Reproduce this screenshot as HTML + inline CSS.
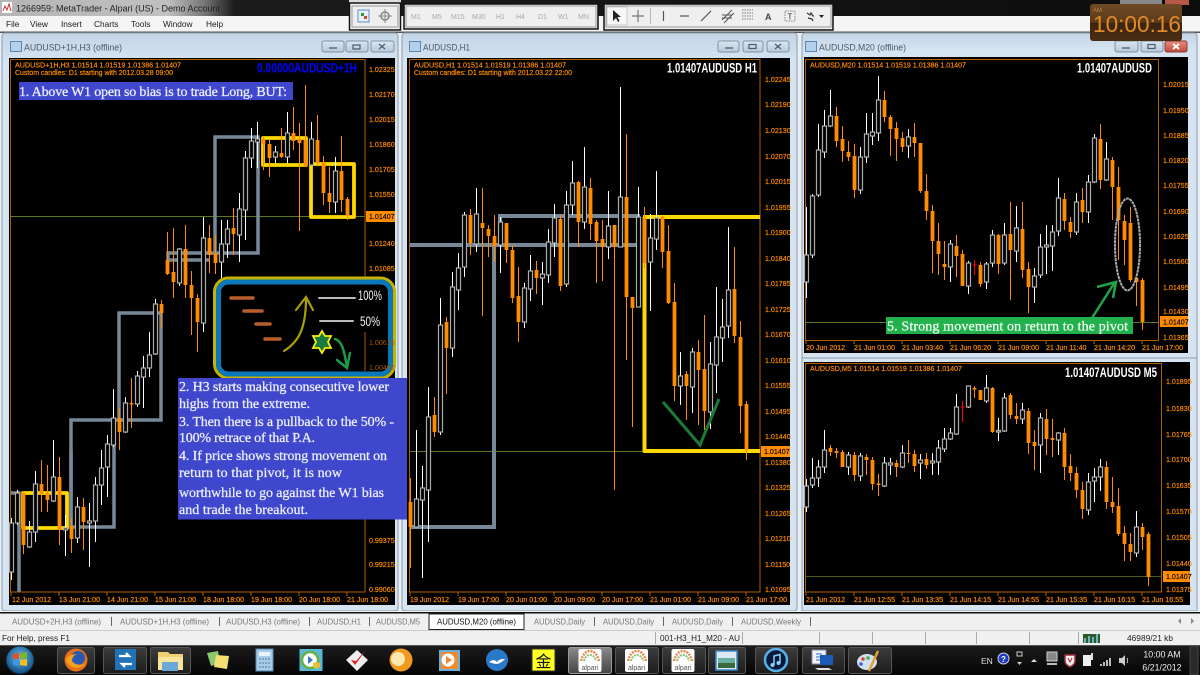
<!DOCTYPE html>
<html><head><meta charset="utf-8"><title>MetaTrader</title>
<style>html,body{margin:0;padding:0;background:#000;width:1200px;height:675px;overflow:hidden}svg{display:block}</style></head>
<body>
<svg width="1200" height="675" viewBox="0 0 1200 675" xmlns="http://www.w3.org/2000/svg" font-family="'Liberation Sans',sans-serif">
<defs>
<linearGradient id="tb" x1="0" x2="1" y1="0" y2="0"><stop offset="0" stop-color="#b5b5b5"/><stop offset=".14" stop-color="#c0c0c0"/><stop offset=".17" stop-color="#777"/><stop offset=".195" stop-color="#1c1c1c"/><stop offset="1" stop-color="#0c0c0c"/></linearGradient>
<linearGradient id="win" x1="0" x2="0" y1="0" y2="1"><stop offset="0" stop-color="#c3d4e6"/><stop offset=".05" stop-color="#d6e4f1"/><stop offset="1" stop-color="#d6e4f1"/></linearGradient>
<linearGradient id="btn" x1="0" x2="0" y1="0" y2="1"><stop offset="0" stop-color="#dbe7f2"/><stop offset="1" stop-color="#b5c8da"/></linearGradient>
<linearGradient id="red" x1="0" x2="0" y1="0" y2="1"><stop offset="0" stop-color="#e88e80"/><stop offset="1" stop-color="#c04a3c"/></linearGradient>
<linearGradient id="task" x1="0" x2="0" y1="0" y2="1"><stop offset="0" stop-color="#1c1c1c"/><stop offset="1" stop-color="#050505"/></linearGradient>
<linearGradient id="tbtn" x1="0" x2="0" y1="0" y2="1"><stop offset="0" stop-color="#3c3c3c"/><stop offset="1" stop-color="#1c1c1c"/></linearGradient>
<linearGradient id="tact" x1="0" x2="0" y1="0" y2="1"><stop offset="0" stop-color="#8a8a8a"/><stop offset="1" stop-color="#444"/></linearGradient>
<linearGradient id="clk" x1="0" x2="0" y1="0" y2="1"><stop offset="0" stop-color="#6e4a26"/><stop offset=".5" stop-color="#5c3a1a"/><stop offset=".52" stop-color="#3c2410"/><stop offset="1" stop-color="#4a2e14"/></linearGradient>
<radialGradient id="orb" cx=".5" cy=".4" r=".6"><stop offset="0" stop-color="#6ab8e8"/><stop offset="1" stop-color="#0c4a80"/></radialGradient>
</defs>

<!-- base -->
<rect width="1200" height="675" fill="#e8eef5"/>
<rect width="1200" height="16" fill="url(#tb)"/>
<rect x="1120" y="0" width="42" height="5" fill="#888"/><rect x="1165" y="0" width="24" height="5" fill="#b8584a"/>
<text x="16" y="11.5" font-size="9.6" fill="#222" textLength="204" lengthAdjust="spacingAndGlyphs">1266959: MetaTrader - Alpari (US) - Demo Account</text>
<rect x="2" y="2" width="10" height="11" fill="#fff"/><path d="M3 11l2-5 2 4 2-6 2 7" stroke="#c33" fill="none"/>
<rect y="16" width="1200" height="16" fill="#f5f5f5"/>
<rect y="31.5" width="1200" height="1.5" fill="#555"/>
<g font-size="8.3" fill="#1a1a1a">
<text x="6" y="27">File</text><text x="30" y="27">View</text><text x="61" y="27">Insert</text><text x="94" y="27">Charts</text><text x="131" y="27">Tools</text><text x="163" y="27">Window</text><text x="206" y="27">Help</text>
</g>

<!-- toolbars -->
<rect x="349" y="0" width="52" height="3" fill="#ddd"/>
<g fill="#efefef" stroke="#111" stroke-width="1.5">
<rect x="349.5" y="3" width="51" height="27"/><rect x="404" y="4" width="194" height="25"/><rect x="604" y="4" width="229" height="26"/>
</g>
<g fill="none" stroke="#999"><rect x="352" y="6" width="46" height="21"/><rect x="406" y="6" width="190" height="21"/><rect x="606" y="6" width="225" height="21"/></g>
<rect x="358" y="10" width="11" height="12" fill="#e8f0fa" stroke="#5b8fc8"/><path d="M361 13h3v3h-3z" fill="#2a9a3a"/><path d="M364 16h3v3h-3z" fill="#c84a2a"/>
<circle cx="385" cy="16" r="4" fill="none" stroke="#888" stroke-width="1.5"/><path d="M385 9v14M378 16h14" stroke="#888"/>
<g font-size="7" fill="#a8a8a8">
<text x="411" y="19">M1</text><text x="432" y="19">M5</text><text x="451" y="19">M15</text><text x="472" y="19">M30</text><text x="496" y="19">H1</text><text x="516" y="19">H4</text><text x="538" y="19">D1</text><text x="558" y="19">W1</text><text x="578" y="19">MN</text>
</g>
<rect x="607" y="7" width="20" height="18" fill="#f8f8f8" stroke="#ccc"/>
<path d="M613 10v11l3-3 2 4 1.5-1-2-4h3.500z" fill="#222"/>
<path d="M638 10v12M632 16h12" stroke="#777" stroke-width="1.200"/>
<path d="M650.500 8v16" stroke="#bbb"/>
<path d="M663.500 11v10" stroke="#555" stroke-width="1.200"/>
<path d="M680 16h9" stroke="#555" stroke-width="1.200"/>
<path d="M701 21l10-10" stroke="#555" stroke-width="1.200"/>
<path d="M722 20l10-10M724 23l10-10M722 15h10M722 18h10" stroke="#555"/>
<path d="M742 10h11M742 13h11M742 16h11M742 19h11" stroke="#777" stroke-dasharray="1.500 1"/>
<text x="765" y="20" font-size="9" font-weight="bold" fill="#444">A</text>
<rect x="785" y="11" width="10" height="10" fill="none" stroke="#888" stroke-dasharray="1.500 1"/><text x="787.500" y="19.500" font-size="8" fill="#333">T</text>
<path d="M807 13l3 2 1-2 2 3 1 0M808 18l4 1 1 2" stroke="#333" stroke-width="1.200" fill="none"/><path d="M819 15h5l-2.500 3z" fill="#222"/>

<!-- windows -->
<rect x="2" y="33" width="396" height="578" fill="url(#win)" stroke="#8d9caa" rx="3"/>
<rect x="402" y="33" width="395" height="578" fill="url(#win)" stroke="#8d9caa" rx="3"/>
<rect x="802" y="33" width="395" height="326" fill="url(#win)" stroke="#8d9caa" rx="3"/>
<rect x="802" y="358" width="395" height="253" fill="#d6e4f1" stroke="#8d9caa"/>
<g fill="#b5d0ea" stroke="#5a87b5"><rect x="10.500" y="41.500" width="11" height="10"/><rect x="409.500" y="41.500" width="11" height="10"/><rect x="805.500" y="41.500" width="11" height="10"/></g>
<g font-size="8.800" fill="#4b5866">
<text x="24" y="50.500" textLength="98" lengthAdjust="spacingAndGlyphs">AUDUSD+1H,H3 (offline)</text>
<text x="423" y="50.500" textLength="47" lengthAdjust="spacingAndGlyphs">AUDUSD,H1</text>
<text x="819" y="50.500" textLength="87" lengthAdjust="spacingAndGlyphs">AUDUSD,M20 (offline)</text>
</g>
<g fill="url(#btn)" stroke="#7f93a6">
<rect x="322" y="41" width="22" height="11" rx="2"/><rect x="346" y="41" width="22" height="11" rx="2"/><rect x="371" y="41" width="23" height="11" rx="2"/>
<rect x="718" y="41" width="21" height="11" rx="2"/><rect x="743" y="41" width="20" height="11" rx="2"/><rect x="767" y="41" width="22" height="11" rx="2"/>
<rect x="1115" y="41" width="23" height="11" rx="2"/><rect x="1141" y="41" width="22" height="11" rx="2"/>
</g>
<rect x="1165" y="41" width="22" height="11" rx="2" fill="url(#red)" stroke="#8a3a30"/>
<g stroke="#4a5a68" fill="none" stroke-width="1.200">
<path d="M329 48h8M725 48h8M1122 48h8"/>
<rect x="353" y="45" width="7" height="4"/><rect x="749" y="44.500" width="7" height="4"/><rect x="1148" y="44.500" width="7" height="4"/>
<path d="M379 44l6 5M385 44l-6 5M775 44l6 5M781 44l-6 5"/>
</g>
<path d="M1173 44l6 5M1179 44l-6 5" stroke="#fff" stroke-width="1.800"/>

<!-- black chart bgs -->
<rect x="9" y="58" width="386" height="547" fill="#000"/>
<rect x="407" y="58" width="383" height="547" fill="#000"/>
<rect x="804" y="57" width="384" height="296" fill="#000"/>
<rect x="804" y="362" width="386" height="243" fill="#000"/>

<!-- frames -->
<g fill="none" stroke="#b06200">
<rect x="10.500" y="59.500" width="354.500" height="532.500"/>
<rect x="409.500" y="59.500" width="350.500" height="532.500"/>
<rect x="805.500" y="59.500" width="353" height="281"/>
<rect x="805.500" y="363.500" width="356" height="228.500"/>
</g>
<g stroke="#5d7a22"><path d="M11 216.500H365M410 451.500H760M806 322.500H1158"/><path d="M806 576.500H1162" stroke="#4a5f1e"/></g>

<!-- ticks -->
<g stroke="#b06200">
<path d="M11 592v4M59 592v4M107 592v4M155 592v4M203 592v4M251 592v4M299 592v4M347 592v4M410 592v4M458 592v4M506 592v4M554 592v4M602 592v4M650 592v4M698 592v4M746 592v4M806 340v4M854 340v4M902 340v4M950 340v4M998 340v4M1046 340v4M1094 340v4M1142 340v4M806 592v4M854 592v4M902 592v4M950 592v4M998 592v4M1046 592v4M1094 592v4M1142 592v4"/>
</g>

<!-- grey steps -->
<g fill="none" stroke="#778899" stroke-width="3.500">
<path d="M11 493H19V592"/>
<path d="M71 450V527H114V418"/>
<path d="M71 527V420H161V313H119V418"/>
<path d="M215 253V137H258V253H168V260H210"/>
<path d="M410 245H638V216H500V224M494 245V527H410" stroke-width="4"/>
</g>
<!-- yellow boxes -->
<g fill="none" stroke="#ffd800" stroke-width="3.800" stroke-linejoin="round">
<rect x="263" y="138" width="43" height="27"/><rect x="311" y="164" width="43" height="53"/><rect x="23" y="493" width="44" height="35"/>
<path d="M643 217H760M644.500 217V451H760" stroke-width="4"/>
</g>

<!-- chart 1 candles -->
<g transform="translate(-.5 0)" fill="none">
<path stroke="#fff" d="M12 518V580M18 490V525M30 521V548M36 471V542M54 440V502M66 515V556M78 497V543M90 503V567M96 477V542M102 450V505M108 435V497M114 389V447M126 397V433M138 371V407M144 356V408M150 332V377M156 299V355M180 248V286M204 217V332M222 220V278M228 220V258M240 193V262M246 151V240M252 128V168M258 122V168M276 146V163M288 112V163M312 122V165M336 157V213"/>
<path stroke="#aaa" stroke-width="1.200" fill="#000" d="M10 523H14V572H10ZM16 493H20V523H16ZM28 532H32V547H28ZM34 484H38V532H34ZM52 477H56V501H52ZM64 528H68V530H64ZM76 507H80V538H76ZM88 521H92V523H88ZM94 485H98V521H94ZM100 468H104V485H100ZM106 444H110V467H106ZM112 418H116V445H112ZM124 403H128V432H124ZM136 376H140V404H136ZM142 368H146V377H142ZM148 355H152V368H148ZM154 304H158V354H154ZM178 249H182V283H178ZM202 238H206V323H202ZM220 244H224V262H220ZM226 229H230V244H226ZM238 209H242V235H238ZM244 158H248V210H244ZM250 141H254V158H250ZM256 139H260V142H256ZM274 152H278V157H274ZM286 133H290V157H286ZM310 139H314V165H310ZM334 171H338V202H334Z"/>
<path stroke="#ff8c00" d="M24 492V554M42 460V512M48 465V512M60 457V545M72 518V553M84 498V550M120 408V450M132 378V428M162 300V328M168 232V275M174 228V298M186 225V298M192 271V335M198 294V352M210 225V273M216 235V274M234 208V255M264 137V170M270 140V177M282 128V158M294 107V150M300 123V231M306 85V167M318 115V165M324 156V205M330 167V213M342 136V212M348 197V220"/>
<path stroke="#ff8c00" stroke-width="3.800" d="M24 493V545M42 484V494M48 493V500M60 477V530M72 526V539M84 507V522M120 418V432M132 403V404.500M162 304V313M168 260V274M174 272V282M186 249V285M192 285V298M198 298V322M210 238V255M216 253V263M234 228V234M264 139V144M270 144V158M282 153V157M294 133V141M300 139V143M306 140V166M318 140V163M324 163V193M330 193V202M342 171V200M348 199V216"/>
</g>

<!-- chart 2 candles -->
<g transform="translate(.5 0)" fill="none">
<path stroke="#fff" d="M416 430V527M422 466V578M428 387V542M440 298V435M452 272V357M458 253V310M464 212V277M476 188V252M500 217V273M524 283V328M530 255V301M542 262V305M548 229V283M554 204V257M566 191V287M572 161V215M584 147V229M608 191V259M620 87V247M638 187V307M650 214V311M656 171V250M680 352V405M692 348V413M710 342V429M716 287V393M722 299V362M728 227V338"/>
<path stroke="#aaa" stroke-width="1.200" fill="#000" d="M414 499H418V527H414ZM420 488H424V500H420ZM426 417H430V490H426ZM438 325H442V432H438ZM450 287H454V348H450ZM456 268H460V290H456ZM462 215H466V267H462ZM474 214H478V244H474ZM498 222H502V245H498ZM522 288H526V322H522ZM528 271H532V289H528ZM540 274H544V278H540ZM546 242H550V275H546ZM552 218H556V243H552ZM564 205H568V284H564ZM570 183H574V205H570ZM582 187H586V222H582ZM606 226H610V247H606ZM618 197H622V247H618ZM636 217H640V307H636ZM648 238H652V262H648ZM654 218H658V239H654ZM678 376H682V386H678ZM690 352H694V387H690ZM708 364H712V412H708ZM714 337H718V365H714ZM720 327H724V338H720ZM726 290H730V326H726Z"/>
<path stroke="#ff8c00" d="M410 478V568M434 397V437M446 317V394M470 209V255M482 188V316M488 225V257M494 215V262M506 223V263M512 245V303M518 267V342M536 261V294M560 215V291M578 181V247M590 178V240M596 220V283M602 220V281M614 228V490M626 134V360M632 297V427M644 207V268M662 216V268M668 225V304M674 283V401M686 371V420M698 340V425M704 315V430M734 247V343M740 321V433M746 401V460"/>
<path stroke="#ff8c00" stroke-width="3.800" d="M410 502V527M434 415V432M446 322V348M470 215V243M482 223V228M488 229V236M494 236V246M506 223V250M512 250V298M518 296V322M536 270V278M560 219V286M578 182V222M590 188V224M596 222V241M602 239V247M614 225V247M626 197V297M632 297V308M644 218V263M662 217V252M668 251V303M674 302V386M686 374V386M698 352V370M704 369V411M734 289V336M740 337V406M746 404V450"/>
</g>

<!-- chart 3 candles -->
<g transform="translate(.5 0)" fill="none">
<path stroke="#fff" d="M806 207V298M812 194V258M818 124V197M824 110V158M830 90V127M860 147V194M866 113V163M872 113V145M878 76V141M908 129V158M950 240V282M968 261V294M986 262V289M992 230V267M1004 223V265M1016 206V262M1034 268V303M1040 234V278M1046 225V274M1052 225V271M1058 178V236M1076 193V235M1088 175V223M1094 134V183M1106 142V181"/>
<path stroke="#aaa" stroke-width="1.200" fill="#000" d="M804 255H808V282H804ZM810 196H814V255H810ZM816 150H820V195H816ZM822 126H826V152H822ZM828 116H832V126H828ZM858 157H862V190H858ZM864 134H868V157H864ZM870 132H874V136H870ZM876 100H880V133H876ZM906 137H910V146H906ZM948 244H952V267H948ZM966 263H970V286H966ZM984 264H988V282H984ZM990 235H994V263H990ZM1002 235H1006V263H1002ZM1014 228H1018V251H1014ZM1032 276H1036V287H1032ZM1038 247H1042V275H1038ZM1044 245H1048V247H1044ZM1050 232H1054V246H1050ZM1056 198H1060V231H1056ZM1074 202H1078V232H1074ZM1086 182H1090V212H1086ZM1092 138H1096V182H1092ZM1104 159H1108V180H1104Z"/>
<path stroke="#ff8c00" d="M836 107V147M842 126V162M848 141V161M854 144V198M884 91V122M890 115V156M896 122V161M902 132V152M914 123V157M920 143V193M926 174V220M932 205V273M938 223V275M944 241V280M956 235V277M962 250V286M980 262V287M998 234V274M1010 202V300M1022 202V278M1028 262V313M1064 193V230M1070 217V238M1082 188V223M1100 124V189M1112 157V220M1118 167V260M1124 215V265M1130 207V282M1136 277V306M1142 278V330"/>
<path stroke="#ff8c00" stroke-width="3.800" d="M836 116V141M842 139V151M848 152V157M854 156V190M884 100V117M890 117V129M896 128V139M902 138V147M914 137V143M920 143V191M926 191V211M932 211V241M938 241V254M944 264V267M956 246V256M962 254V286M980 265V284M998 235V264M1010 234V250M1022 229V270M1028 269V287M1064 199V221M1070 222V232M1082 200V212M1100 139V180M1112 160V187M1118 187V220M1124 221V240M1130 223V280M1136 278V282M1142 280V322"/>
<path stroke="#f00" d="M974 260V275M972 265H976"/>
</g>

<!-- chart 4 candles -->
<g transform="translate(.5 0)" fill="none">
<path stroke="#fff" d="M806 479V512M812 458V488M818 460V487M824 430V473M848 452V475M860 453V481M884 457V487M890 458V475M902 445V468M920 454V479M932 453V475M938 440V475M944 428V452M950 428V440M956 394V435M968 386V408M986 375V403M998 418V441M1004 393V432M1022 403V424M1040 413V473M1058 432V455M1088 473V515M1094 468V502M1100 459V491M1136 511V557"/>
<path stroke="#aaa" stroke-width="1.200" fill="#000" d="M804 486H808V507H804ZM810 478H814V485H810ZM816 467H820V478H816ZM822 450H826V467H822ZM846 455H850V467H846ZM858 456H862V476H858ZM882 463H886V486H882ZM888 463H892V465H888ZM900 453H904V467H900ZM918 460H922V463H918ZM930 461H934V463H930ZM936 448H940V462H936ZM942 439H946V449H942ZM948 433H952V439H948ZM954 407H958V434H954ZM966 386H970V407H966ZM984 388H988V401H984ZM996 430.500H1000V432H996ZM1002 398H1006V431H1002ZM1020 410H1024V419H1020ZM1038 418H1042V445H1038ZM1056 433H1060V440H1056ZM1086 482H1090V510H1086ZM1092 477H1096V481H1092ZM1098 467H1102V477H1098ZM1134 527H1138V553H1134Z"/>
<path stroke="#ff8c00" d="M830 445V456M836 448V458M842 450V467M854 452V481M866 454V475M872 457V490M878 474V496M896 460V477M908 440V463M914 450V472M926 453V469M974 386V398M980 390V400M992 387V433M1010 393V419M1016 403V424M1028 408V454M1034 430V470M1046 409V455M1052 419V457M1064 428V480M1070 454V481M1076 467V498M1082 482V519M1106 461V509M1112 477V513M1118 488V536M1124 526V561M1130 533V561M1142 523V550M1148 532V586"/>
<path stroke="#ff8c00" stroke-width="3.800" d="M830 448V452M836 451V453M842 452V467M854 455V475M866 457V460M872 460V484M878 483.500V485M896 463V467M908 453V454M914 454V466M926 459V465M974 388V389.500M980 390V400M992 388V432M1010 395V415M1016 416V419M1028 411V443M1034 442V446M1046 419V439M1052 438V440M1064 433V467M1070 466V473M1076 473V490M1082 490V509M1106 467V502M1112 502V507M1118 506V534M1124 533V544M1130 544V552M1142 527V537M1148 534V577"/>
<path stroke="#f00" d="M962 401V422M960 407H964"/>
</g>

<!-- V mark, ellipse, arrow -->
<path d="M663 402L700 445 719 399" fill="none" stroke="#1a7a3c" stroke-width="3"/>
<ellipse cx="1127.500" cy="244.500" rx="12.500" ry="46" fill="none" stroke="#aaa" stroke-width="2" stroke-dasharray="3 .6"/>
<path d="M1092 318L1115 282M1097 287L1116 282 1113 298" fill="none" stroke="#22a24c" stroke-width="2.500"/>

<!-- axis labels -->
<g font-size="7.100" fill="#ff8c00" stroke="#ff8c00" stroke-width=".18">
<text x="369" y="72">1.02325</text><text x="369" y="97">1.02170</text><text x="369" y="122">1.02015</text><text x="369" y="147">1.01860</text><text x="369" y="172">1.01705</text><text x="369" y="197">1.01550</text><text x="369" y="246">1.01240</text><text x="369" y="271">1.01085</text><text x="369" y="543">0.99375</text><text x="369" y="567">0.99215</text><text x="369" y="592">0.99060</text>
<text x="12" y="602">12 Jun 2012</text><text x="59" y="602">13 Jun 21:00</text><text x="107" y="602">14 Jun 21:00</text><text x="155" y="602">15 Jun 21:00</text><text x="203" y="602">18 Jun 18:00</text><text x="251" y="602">19 Jun 18:00</text><text x="299" y="602">20 Jun 18:00</text><text x="347" y="602">21 Jun 18:00</text>
<text x="765" y="82">1.02245</text><text x="765" y="107">1.02190</text><text x="765" y="133">1.02130</text><text x="765" y="159">1.02070</text><text x="765" y="184">1.02015</text><text x="765" y="210">1.01955</text><text x="765" y="235">1.01900</text><text x="765" y="261">1.01840</text><text x="765" y="286">1.01785</text><text x="765" y="312">1.01725</text><text x="765" y="337">1.01670</text><text x="765" y="363">1.01610</text><text x="765" y="388">1.01555</text><text x="765" y="414">1.01495</text><text x="765" y="439">1.01440</text><text x="765" y="465">1.01380</text><text x="765" y="490">1.01325</text><text x="765" y="516">1.01265</text><text x="765" y="541">1.01210</text><text x="765" y="567">1.01150</text><text x="765" y="592">1.01095</text>
<text x="410" y="602">19 Jun 2012</text><text x="458" y="602">19 Jun 17:00</text><text x="506" y="602">20 Jun 01:00</text><text x="554" y="602">20 Jun 09:00</text><text x="602" y="602">20 Jun 17:00</text><text x="650" y="602">21 Jun 01:00</text><text x="698" y="602">21 Jun 09:00</text><text x="746" y="602">21 Jun 17:00</text>
<text x="1163" y="87">1.02015</text><text x="1163" y="113">1.01950</text><text x="1163" y="138">1.01885</text><text x="1163" y="163">1.01820</text><text x="1163" y="188">1.01755</text><text x="1163" y="214">1.01690</text><text x="1163" y="239">1.01625</text><text x="1163" y="264">1.01560</text><text x="1163" y="290">1.01495</text><text x="1163" y="314">1.01430</text><text x="1163" y="340">1.01365</text>
<text x="806" y="350">20 Jun 2012</text><text x="854" y="350">21 Jun 01:00</text><text x="902" y="350">21 Jun 03:40</text><text x="950" y="350">21 Jun 06:20</text><text x="998" y="350">21 Jun 09:00</text><text x="1046" y="350">21 Jun 11:40</text><text x="1094" y="350">21 Jun 14:20</text><text x="1142" y="350">21 Jun 17:00</text>
<text x="1166" y="384">1.01895</text><text x="1166" y="411">1.01830</text><text x="1166" y="437">1.01765</text><text x="1166" y="462">1.01700</text><text x="1166" y="488">1.01635</text><text x="1166" y="514">1.01570</text><text x="1166" y="540">1.01505</text><text x="1166" y="566">1.01440</text><text x="1166" y="592">1.01375</text>
<text x="806" y="602">21 Jun 2012</text><text x="854" y="602">21 Jun 12:55</text><text x="902" y="602">21 Jun 13:35</text><text x="950" y="602">21 Jun 14:15</text><text x="998" y="602">21 Jun 14:55</text><text x="1046" y="602">21 Jun 15:35</text><text x="1094" y="602">21 Jun 16:15</text><text x="1142" y="602">21 Jun 16:55</text>
<text x="15" y="67.500" textLength="166" lengthAdjust="spacingAndGlyphs">AUDUSD+1H,H3  1.01514 1.01519 1.01386 1.01407</text>
<text x="15" y="75" textLength="158" lengthAdjust="spacingAndGlyphs">Custom candles: D1 starting with 2012.03.28 09:00</text>
<text x="414" y="67.500" textLength="152" lengthAdjust="spacingAndGlyphs">AUDUSD,H1  1.01514 1.01519 1.01386 1.01407</text>
<text x="414" y="75" textLength="158" lengthAdjust="spacingAndGlyphs">Custom candles: D1 starting with 2012.03.22 22:00</text>
<text x="810" y="67.500" textLength="156" lengthAdjust="spacingAndGlyphs">AUDUSD,M20  1.01514 1.01519 1.01386 1.01407</text>
<text x="810" y="371" textLength="152" lengthAdjust="spacingAndGlyphs">AUDUSD,M5  1.01514 1.01519 1.01386 1.01407</text>
</g>
<!-- price boxes -->
<g fill="#ff8c00"><rect x="366" y="211" width="29" height="11"/><rect x="761" y="446" width="29" height="11"/><rect x="1160" y="316" width="28" height="11"/><rect x="1163" y="571" width="27" height="11"/></g>
<g font-size="7.100" fill="#000" stroke="#000" stroke-width=".15"><text x="369" y="219">1.01407</text><text x="764" y="454">1.01407</text><text x="1163" y="324.500">1.01407</text><text x="1166" y="579">1.01407</text></g>
<!-- big labels -->
<g font-size="13.500" font-weight="bold">
<text x="257" y="72.500" fill="#0000ff" textLength="100" lengthAdjust="spacingAndGlyphs">0.00000AUDUSD+1H</text>
<g fill="#fff">
<text x="667" y="72.500" textLength="90" lengthAdjust="spacingAndGlyphs">1.01407AUDUSD H1</text>
<text x="1077" y="72.500" textLength="75" lengthAdjust="spacingAndGlyphs">1.01407AUDUSD</text>
<text x="1065" y="377" textLength="92" lengthAdjust="spacingAndGlyphs">1.01407AUDUSD M5</text>
</g></g>

<!-- annotation 1 -->
<rect x="19" y="82" width="274" height="18" fill="#3f48cc"/>
<g font-family="'Liberation Serif',serif" font-size="14" fill="#eef0ff" stroke="#eef0ff" stroke-width=".25">
<text x="19" y="96" textLength="268" lengthAdjust="spacing">1. Above W1 open so bias is to trade Long, BUT:</text>
</g>

<!-- inset -->
<rect x="214.500" y="278" width="180" height="100" rx="14" fill="#000" stroke="#c4b400" stroke-width="3"/>
<rect x="218.500" y="282" width="172" height="92" rx="10" fill="#000" stroke="#0a78b8" stroke-width="5"/>
<path d="M365 332V371" stroke="#a65c00"/>
<g fill="none" stroke-linecap="round">
<g stroke="#bb5e2c" stroke-width="3.500"><path d="M231 298H253M244 311H262M256 324H270M265 339H280"/></g>
<path d="M284 351C298 342 306 330 306 298M296 310L306 297 313 310" stroke="#a8a000" stroke-width="2.200"/>
<path d="M319 298H355M320 321H353" stroke="#bbb" stroke-width="2"/>
<path d="M335 339C342 341 344 350 347 367M337 360L347 368 350 353" stroke="#1d9a47" stroke-width="2.500"/>
</g>
<path d="M322 331l3 5h6l-3 6 3 6h-6l-3 5-3-5h-6l3-6-3-6h6z" fill="#1a7a40" stroke="#f4ee10" stroke-width="1.800"/>
<g font-size="14" fill="#f4f4f4">
<text x="358" y="300" textLength="24" lengthAdjust="spacingAndGlyphs">100%</text><text x="360" y="326" textLength="20" lengthAdjust="spacingAndGlyphs">50%</text>
</g>
<g font-size="7.100" fill="#a85a00"><text x="369" y="345">1.00615</text><text x="369" y="370">1.00460</text></g>

<!-- annotation 2 -->
<rect x="178" y="378" width="229" height="141.500" fill="#3f48cc"/>
<g font-family="'Liberation Serif',serif" font-size="14" fill="#eef0ff" stroke="#eef0ff" stroke-width=".25">
<text x="179" y="391" textLength="210" lengthAdjust="spacing">2. H3 starts making consecutive lower</text>
<text x="179" y="408" textLength="131" lengthAdjust="spacing">highs from the extreme.</text>
<text x="179" y="426" textLength="215" lengthAdjust="spacing">3. Then there is a pullback to the 50% -</text>
<text x="179" y="442" textLength="136" lengthAdjust="spacing">100% retrace of that P.A.</text>
<text x="179" y="460" textLength="208" lengthAdjust="spacing">4. If price shows strong movement on</text>
<text x="179" y="477" textLength="163" lengthAdjust="spacing">return to that pivot, it is now</text>
<text x="179" y="497" textLength="205" lengthAdjust="spacing">worthwhile to go against the W1 bias</text>
<text x="179" y="514" textLength="129" lengthAdjust="spacing">and trade the breakout.</text>
</g>
<!-- annotation 5 -->
<rect x="886" y="317" width="247" height="17" fill="#22b14c"/>
<text x="887" y="330.500" font-family="'Liberation Serif',serif" font-size="14" fill="#f2fff4" stroke="#f2fff4" stroke-width=".25" textLength="241" lengthAdjust="spacing">5. Strong movement on return to the pivot</text>

<!-- clock -->
<rect x="1090" y="4" width="92" height="37" rx="3" fill="url(#clk)"/>
<text x="1093" y="12" font-size="6" fill="#c08840">AM</text>
<text x="1093" y="32" font-size="23" fill="#e08a28" textLength="88" lengthAdjust="spacingAndGlyphs">10:00:16</text>

<!-- tab bar -->
<rect y="611" width="1200" height="34" fill="#f0f0f0"/>
<rect y="612" width="1200" height="1.500" fill="#111"/>
<rect y="630" width="1200" height="1" fill="#ccc"/>
<rect x="429" y="614" width="95" height="15.500" fill="#fff" stroke="#222"/>
<g font-size="8" fill="#777">
<text x="12" y="624.500" textLength="89" lengthAdjust="spacingAndGlyphs">AUDUSD+2H,H3 (offline)</text>
<text x="120" y="624.500" textLength="89" lengthAdjust="spacingAndGlyphs">AUDUSD+1H,H3 (offline)</text>
<text x="226" y="624.500" textLength="74" lengthAdjust="spacingAndGlyphs">AUDUSD,H3 (offline)</text>
<text x="317" y="624.500" textLength="44" lengthAdjust="spacingAndGlyphs">AUDUSD,H1</text>
<text x="376" y="624.500" textLength="44" lengthAdjust="spacingAndGlyphs">AUDUSD,M5</text>
<text x="534" y="624.500" textLength="51" lengthAdjust="spacingAndGlyphs">AUDUSD,Daily</text>
<text x="603" y="624.500" textLength="51" lengthAdjust="spacingAndGlyphs">AUDUSD,Daily</text>
<text x="672" y="624.500" textLength="51" lengthAdjust="spacingAndGlyphs">AUDUSD,Daily</text>
<text x="741" y="624.500" textLength="60" lengthAdjust="spacingAndGlyphs">AUDUSD,Weekly</text>
</g>
<text x="437" y="624.500" font-size="8" fill="#111" textLength="79" lengthAdjust="spacingAndGlyphs">AUDUSD,M20 (offline)</text>
<path d="M111.500 617v9M219.500 617v9M309.500 617v9M369.500 617v9M594.500 617v9M663.500 617v9M732.500 617v9M810.500 617v9" stroke="#666"/>
<path d="M1181 618v6l-3-3zM1191 618v6l3-3z" fill="#888"/>

<!-- status bar -->
<text x="2" y="641" font-size="8" fill="#222" textLength="68" lengthAdjust="spacingAndGlyphs">For Help, press F1</text>
<path d="M655.500 632v12M742.500 632v12M819.500 632v12M872.500 632v12M925.500 632v12M976.500 632v12M1029.500 632v12M1078.500 632v12" stroke="#aaa"/>
<text x="660" y="641" font-size="8" fill="#222" textLength="80" lengthAdjust="spacingAndGlyphs">001-H3_H1_M20 - AU</text>
<path d="M1083 634h17v9h-17z" fill="#2a5a2a"/><path d="M1085 643v-5M1089 643v-7M1093 643v-6M1097 643v-9" stroke="#8fd0f0" stroke-width="1.500"/>
<text x="1127" y="641" font-size="8" fill="#222" textLength="46" lengthAdjust="spacingAndGlyphs">46989/21 kb</text>

<!-- taskbar -->
<rect y="645" width="1200" height="30" fill="url(#task)"/>
<rect y="645" width="1200" height="1" fill="#555"/>
<g fill="url(#tbtn)" stroke="#555">
<rect x="57.500" y="647.500" width="37" height="26" rx="2"/><rect x="103.500" y="647.500" width="43" height="26" rx="2"/><rect x="150.500" y="647.500" width="40" height="26" rx="2"/><rect x="708.500" y="647.500" width="37" height="26" rx="2"/><rect x="755.500" y="647.500" width="42" height="26" rx="2"/><rect x="802.500" y="647.500" width="42" height="26" rx="2"/><rect x="848.500" y="647.500" width="43" height="26" rx="2"/><rect x="615.500" y="647.500" width="43" height="26" rx="2"/><rect x="662.500" y="647.500" width="43" height="26" rx="2"/>
</g>
<rect x="568.500" y="647.500" width="43" height="26" rx="2" fill="url(#tact)" stroke="#999"/>

<!-- start orb -->
<circle cx="20" cy="660" r="14" fill="url(#orb)" stroke="#123"/>
<path d="M13 654l6-1v6h-6z" fill="#e8502a"/><path d="M20 653l7-1v6l-7 1z" fill="#7ab82a"/><path d="M13 660h6v6l-6-1z" fill="#3a9ae8"/><path d="M20 660l7-1v7l-7-1z" fill="#f4c020"/>
<!-- firefox -->
<circle cx="76" cy="660" r="11.500" fill="#e8701a"/><circle cx="78" cy="658" r="7" fill="#2a5ab0"/><path d="M66 660c2 8 14 11 20 3-5 3-11 2-14-2 0-3 2-6 5-7-5 0-10 2-11 6z" fill="#f4a020"/>
<!-- blue z -->
<rect x="115" y="649" width="21" height="21" fill="#2272b8"/><path d="M119 656h10l-3-3M132 664h-10l3 3" stroke="#fff" stroke-width="2.200" fill="none"/>
<!-- folder -->
<path d="M158 652h10l2 2h13v16h-25z" fill="#f0d070"/><rect x="158" y="657" width="25" height="13" fill="#f8e49a"/><rect x="162" y="662" width="16" height="9" fill="#6aa8d8"/>
<!-- notes -->
<path d="M207 653l11-2 2 12-9 3z" fill="#8ac870"/><path d="M216 655l13 1-2 13-13-2z" fill="#f4e070"/>
<!-- calc -->
<rect x="256" y="649" width="17" height="22" fill="#a8cce8" stroke="#5a8ab0"/><rect x="259" y="652" width="11" height="4" fill="#e8f4fc"/><path d="M259 659h11M259 663h11M259 667h11" stroke="#4a78a0" stroke-dasharray="2 1"/>
<!-- media -->
<rect x="299.500" y="649" width="23" height="22" fill="#58b8d8"/><circle cx="310" cy="660" r="8" fill="#fff" stroke="#6ab040" stroke-width="2.500"/><path d="M308 656l5 4-5 4z" fill="#3a78c8"/>
<path d="M316 662l4 1v4l-4 2-3-2v-4z" fill="#e8c030"/>
<!-- red check -->
<path d="M346 660l11-10 11 10-11 11z" fill="#eee"/><path d="M351 660l4 5 11-15-10 11z" fill="#e02020"/>
<!-- orange ball -->
<circle cx="401" cy="660" r="11.500" fill="#f09a20"/><circle cx="398" cy="659" r="7" fill="#fbe8b0"/>
<!-- wmp -->
<rect x="440" y="651" width="19" height="19" fill="#f08a30" stroke="#6ab0d8" stroke-width="2"/><circle cx="448" cy="660" r="6.500" fill="#fff"/><path d="M446 656l6 4-6 4z" fill="#f08a30"/>
<!-- bird -->
<circle cx="497" cy="660" r="11" fill="#2a78c8"/><path d="M489 662c4-3 6-2 8 0 2-3 5-3 8-3-2 2-4 4-8 5-3 0-5-1-8-2z" fill="#fff"/>
<!-- gold -->
<rect x="532" y="649" width="23" height="22" fill="#ffff20" stroke="#333"/>
<text x="543.500" y="667" text-anchor="middle" font-size="16" fill="#111" font-family="'Liberation Sans','Noto Sans CJK SC',sans-serif">金</text>
<!-- alpari -->
<g>
<rect x="578.500" y="649" width="23" height="23" rx="2" fill="#fff"/><path d="M581 661c2-8 6-10 9-10s7 2 9 10" fill="none" stroke="#e88a50" stroke-width="2.500" stroke-dasharray="2 1"/><path d="M584 661c1-4 3-6 6-6s5 2 6 6" fill="none" stroke="#8ac070" stroke-width="2" stroke-dasharray="2 1"/>
<text x="590" y="670" text-anchor="middle" font-size="7" fill="#555">alpari</text>
<rect x="625" y="649" width="23" height="23" rx="2" fill="#fff"/><path d="M628 661c2-8 6-10 9-10s7 2 9 10" fill="none" stroke="#e88a50" stroke-width="2.500" stroke-dasharray="2 1"/><path d="M631 661c1-4 3-6 6-6s5 2 6 6" fill="none" stroke="#8ac070" stroke-width="2" stroke-dasharray="2 1"/>
<text x="636.500" y="670" text-anchor="middle" font-size="7" fill="#555">alpari</text>
<rect x="671.500" y="649" width="23" height="23" rx="2" fill="#fff"/><path d="M674 661c2-8 6-10 9-10s7 2 9 10" fill="none" stroke="#e88a50" stroke-width="2.500" stroke-dasharray="2 1"/><path d="M677 661c1-4 3-6 6-6s5 2 6 6" fill="none" stroke="#8ac070" stroke-width="2" stroke-dasharray="2 1"/>
<text x="683" y="670" text-anchor="middle" font-size="7" fill="#555">alpari</text>
</g>
<!-- pics -->
<rect x="716" y="651" width="21" height="19" fill="#dbeaf6" stroke="#3a8ac8" stroke-width="1.500"/><path d="M718 658h17v5h-17z" fill="#6ab0a0"/><path d="M718 663h17v5h-17z" fill="#3a6a3a"/>
<!-- itunes -->
<circle cx="776" cy="660" r="11" fill="#0a1a3a" stroke="#5ab0e8" stroke-width="2.500"/><path d="M774 665v-9l6-1.500v8.500" stroke="#8ad0f8" stroke-width="1.500" fill="none"/><circle cx="772.500" cy="665" r="2" fill="#8ad0f8"/><circle cx="778.500" cy="663" r="2" fill="#8ad0f8"/>
<!-- computer -->
<rect x="812" y="650" width="14" height="14" fill="#f0f4fa" stroke="#88a"/><rect x="820" y="655" width="13" height="10" fill="#1c5ab8"/><path d="M816 654h6M816 657h4M816 660h4" stroke="#2a6ac8"/><path d="M815 668h14l3 2h-14z" fill="#ddd"/>
<!-- palette -->
<ellipse cx="867" cy="662" rx="10" ry="8" fill="#cfe0f0"/><circle cx="863" cy="659" r="1.800" fill="#e04040"/><circle cx="868" cy="658" r="1.800" fill="#40b040"/><circle cx="861" cy="664" r="1.800" fill="#4060e0"/><path d="M869 671l9-20" stroke="#e8a030" stroke-width="2.500"/>
<!-- tray -->
<text x="981" y="664" font-size="8.500" fill="#ddd">EN</text>
<circle cx="1003.500" cy="658.500" r="5.500" fill="#1c3ac8" stroke="#ccc"/><text x="1003.500" y="662" font-size="8" font-weight="bold" fill="#fff" text-anchor="middle">?</text>
<rect x="1017" y="652" width="5" height="4" fill="none" stroke="#ccc"/><path d="M1017 662h5l-2.500 3z" fill="#ccc"/>
<path d="M1031 662h6l-3-3z" fill="#ddd"/>
<rect x="1047" y="652" width="10" height="9" fill="#888" stroke="#ccc"/><path d="M1047 664h10" stroke="#bbb" stroke-width="2"/>
<path d="M1065 655h10v6c0 3-3 5-5 6-2-1-5-3-5-6z" fill="#eee" stroke="#a02a3a" stroke-width="1.500"/><path d="M1068 658l2 4 2-4" stroke="#a02a3a" fill="none"/>
<rect x="1083" y="655" width="8" height="11" fill="#eee"/><path d="M1092 653v7" stroke="#ddd" stroke-width="2"/>
<path d="M1101 664v2M1104 662v4M1107 660v6M1110 658v8" stroke="#ccc" stroke-width="1.800"/>
<path d="M1119 658h3l3-3v11l-3-3h-3z" fill="#ccc"/><path d="M1127 658c1 2 1 3 0 5" stroke="#ccc" fill="none"/>
<g font-size="8.800" fill="#eee" text-anchor="middle"><text x="1162" y="657.500">10:00 AM</text><text x="1162" y="670.500">6/21/2012</text></g>
<rect x="1190" y="646" width="8" height="29" fill="#2a2a2a" stroke="#444"/>
</svg>
</body></html>
